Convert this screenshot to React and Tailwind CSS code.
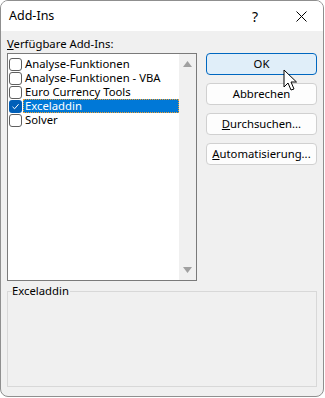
import React from 'react'

const items = [
    { name: 'Analyse-Funktionen', checked: false },
    { name: 'Analyse-Funktionen - VBA', checked: false },
    { name: 'Euro Currency Tools', checked: false },
    { name: 'Exceladdin', checked: true, selected: true },
    { name: 'Solver', checked: false },
]

const CheckBox = ({ checked }) => (
    checked ? (
        <div className="w-[13px] h-[13px] rounded-[3px] bg-[#005fb8] flex items-center justify-center shrink-0">
            <svg width="9" height="9" viewBox="0 0 9 9"><path d="M1.5 4.8 L3.6 6.8 L7.6 2.2" stroke="#ffffff" strokeWidth="1" fill="none" /></svg>
        </div>
    ) : (
        <div className="w-[13px] h-[13px] rounded-[3px] border border-[#5f5f5f] bg-white shrink-0"></div>
    )
)

const Button = ({ children, primary }) => (
    <button className={primary
        ? "w-[111px] h-[22px] rounded-[4px] border border-[#0067c0] bg-[#e0eef9] text-black text-[11.3px] leading-none"
        : "w-[111px] h-[22px] rounded-[4px] border border-[#d0d0d0] bg-[#fdfdfd] text-black text-[11.3px] leading-none"}>
        {children}
    </button>
)

const Cursor = () => (
    <svg className="absolute left-[283px] top-[69px]" width="16" height="24" viewBox="0 0 16 24">
        <path d="M1 1 L1 18 L5 14 L8 21 L11 20 L8 13 L13.5 13 Z" fill="#ffffff" stroke="#000000" strokeWidth="1" strokeLinejoin="round" />
    </svg>
)

export default function App() {
    return (
        <div className="w-[325px] h-[398px] bg-white relative" style={{ fontFamily: '"Noto Sans", "Open Sans", sans-serif' }}>
            <div className="w-[324px] h-[397px] rounded-[8px] border border-[#8f8f8f] overflow-hidden flex flex-col bg-[#f0f0f0]">
                {/* title bar */}
                <div className="h-[30px] bg-white flex items-center shrink-0">
                    <span className="ml-[8px] text-[12.5px] text-black">Add-Ins</span>
                    <span className="ml-auto mr-[38px] text-[14px] text-black">?</span>
                    <svg className="mr-[16px]" width="11" height="11" viewBox="0 0 11 11">
                        <path d="M0.5 0.5 L10.5 10.5 M10.5 0.5 L0.5 10.5" stroke="#000" strokeWidth="1" />
                    </svg>
                </div>
                <div className="flex pl-[6px] pt-[5px]">
                    <div className="w-[190px]">
                        <div className="text-[11.3px] leading-[16px] text-black h-[17px]"><u>V</u>erfügbare Add-Ins:</div>
                        <div className="h-[228px] border border-[#7a7a7a] bg-white flex">
                            <div className="flex-1 pt-[3px] pl-[1px]">
                                {items.map((item, index) => (
                                    <div key={index} className="h-[14px] flex items-center">
                                        <CheckBox checked={item.checked} />
                                        <span className={item.selected
                                            ? "ml-[1px] h-[14px] flex-1 bg-[#0078d7] text-white text-[11.3px] leading-[14px] pl-[2px] outline outline-1 outline-dotted outline-[#f0a030] -outline-offset-1"
                                            : "ml-[1px] h-[14px] text-black text-[11.3px] leading-[14px] pl-[2px]"}>
                                            {item.name}
                                        </span>
                                    </div>
                                ))}
                            </div>
                            <div className="w-[17px] bg-[#f0f0f0] flex flex-col items-center justify-between py-[7px]">
                                <svg width="9" height="6" viewBox="0 0 9 6"><path d="M0 6 L4.5 0 L9 6 Z" fill="#a0a0a0" /></svg>
                                <svg width="9" height="6" viewBox="0 0 9 6"><path d="M0 0 L4.5 6 L9 0 Z" fill="#a0a0a0" /></svg>
                            </div>
                        </div>
                    </div>
                    <div className="ml-[9px] pt-[17px] flex flex-col gap-[8px]">
                        <Button primary>OK</Button>
                        <Button>Abbrechen</Button>
                        <Button><u>D</u>urchsuchen...</Button>
                        <Button><u>A</u>utomatisierung...</Button>
                    </div>
                </div>
                <div className="relative mx-[6px] mt-[10px] h-[96px] border border-[#d8d8d8]">
                    <span className="absolute left-[4px] -top-[9px] bg-[#f0f0f0] pr-[1px] text-[11.3px] leading-[16px] text-black">Exceladdin</span>
                </div>
            </div>
            <Cursor />
        </div>
    )
}
